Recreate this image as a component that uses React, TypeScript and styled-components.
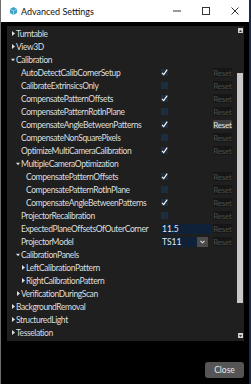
import React from 'react';
import styled, { createGlobalStyle } from 'styled-components';

const GlobalStyle = createGlobalStyle`
  html, body {
    margin: 0;
    padding: 0;
    background: #1b2a4a;
    font-family: Lato, "Noto Sans", sans-serif;
  }
`;

type Node = {
  label: string;
  level: number;
  arrow?: 'open' | 'closed';
  kind?: 'check' | 'text' | 'select';
  checked?: boolean;
  value?: string;
  resetOn?: boolean;
};

const rows: Node[] = [
  { label: 'Turntable', level: 0, arrow: 'closed' },
  { label: 'View3D', level: 0, arrow: 'closed' },
  { label: 'Calibration', level: 0, arrow: 'open' },
  { label: 'AutoDetectCalibCornerSetup', level: 1, kind: 'check', checked: true },
  { label: 'CalibrateExtrinsicsOnly', level: 1, kind: 'check' },
  { label: 'CompensatePatternOffsets', level: 1, kind: 'check', checked: true },
  { label: 'CompensatePatternRotInPlane', level: 1, kind: 'check' },
  { label: 'CompensateAngleBetweenPatterns', level: 1, kind: 'check', checked: true, resetOn: true },
  { label: 'CompensateNonSquarePixels', level: 1, kind: 'check' },
  { label: 'OptimizeMultiCameraCalibration', level: 1, kind: 'check', checked: true },
  { label: 'MultipleCameraOptimization', level: 1, arrow: 'open' },
  { label: 'CompensatePatternOffsets', level: 2, kind: 'check', checked: true },
  { label: 'CompensatePatternRotInPlane', level: 2, kind: 'check' },
  { label: 'CompensateAngleBetweenPatterns', level: 2, kind: 'check', checked: true },
  { label: 'ProjectorRecalibration', level: 1, kind: 'check' },
  { label: 'ExpectedPlaneOffsetsOfOuterCorner', level: 1, kind: 'text', value: '11.5' },
  { label: 'ProjectorModel', level: 1, kind: 'select', value: 'TS11' },
  { label: 'CalibrationPanels', level: 1, arrow: 'open' },
  { label: 'LeftCalibrationPattern', level: 2, arrow: 'closed' },
  { label: 'RightCalibrationPattern', level: 2, arrow: 'closed' },
  { label: 'VerificationDuringScan', level: 1, arrow: 'closed' },
  { label: 'BackgroundRemoval', level: 0, arrow: 'closed' },
  { label: 'StructuredLight', level: 0, arrow: 'closed' },
  { label: 'Tesselation', level: 0, arrow: 'closed' },
];

const Window = styled.div`
  width: 249px;
  height: 384px;
  display: flex;
  flex-direction: column;
  background: #000;
  border-left: 1px solid #6d6d6d;
  box-sizing: border-box;
`;

const TitleBar = styled.div`
  height: 22px;
  background: #fff;
  display: flex;
  align-items: center;
  padding-left: 9px;
  color: #111;
  font-size: 9px;
`;

const Title = styled.span`
  margin-left: 4px;
  flex: 1;
`;

const CaptionButton = styled.div`
  width: 29px;
  height: 22px;
  display: flex;
  align-items: center;
  justify-content: center;
`;

const Body = styled.div`
  flex: 1;
  display: flex;
  flex-direction: column;
  padding: 4px 5px 6px 6px;
`;

const Panel = styled.div`
  height: 315px;
  background: #1f1f1f;
  display: flex;
`;

const Tree = styled.div`
  width: 230px;
  padding-top: 1px;
`;

const Row = styled.div`
  height: 13px;
  display: grid;
  grid-template-columns: 154px 52px 19px;
  align-items: center;
`;

const Label = styled.div<{ $level: number }>`
  display: flex;
  align-items: center;
  padding-left: ${(p) => 4 + p.$level * 5}px;
  color: #dedede;
  font-size: 8.5px;
  letter-spacing: -0.4px;
  white-space: nowrap;
  overflow: hidden;
`;

const Arrow = styled.span`
  width: 4px;
  display: flex;
  justify-content: center;
`;

const Spacer = styled.span`
  width: 4px;
`;

const LabelText = styled.span`
  margin-left: 1px;
`;

const Box = styled.div`
  width: 7px;
  height: 7px;
  background: #1d2d40;
  display: flex;
  align-items: center;
  justify-content: center;
`;

const TextField = styled.div`
  width: 50px;
  height: 10px;
  background: #0e2138;
  color: #e6e6e6;
  font-size: 8.5px;
  display: flex;
  align-items: center;
  padding-left: 1px;
  box-sizing: border-box;
`;

const SelectField = styled.div`
  width: 47px;
  height: 10px;
  display: flex;
  color: #e6e6e6;
  font-size: 8.5px;
`;

const SelectValue = styled.div`
  flex: 1;
  background: #0e2138;
  display: flex;
  align-items: center;
  padding-left: 1px;
`;

const SelectArrow = styled.div`
  width: 11px;
  background: #4b4b4b;
  display: flex;
  align-items: center;
  justify-content: center;
`;

const ResetButton = styled.div<{ $on?: boolean }>`
  height: 9px;
  border-radius: 1px;
  background: ${(p) => (p.$on ? '#3d3d3d' : '#161616')};
  color: ${(p) => (p.$on ? '#e4e4e4' : '#4d4d4d')};
  font-size: 8px;
  letter-spacing: -0.2px;
  display: flex;
  align-items: center;
  justify-content: center;
`;

const ScrollBar = styled.div`
  width: 6px;
  display: flex;
  flex-direction: column;
  align-items: center;
  padding-top: 2px;
  padding-bottom: 3px;
`;

const ScrollArrow = styled.div`
  width: 5px;
  height: 5px;
  background: #d0d0d0;
  display: flex;
  align-items: center;
  justify-content: center;
`;

const Track = styled.div`
  flex: 1;
  width: 6px;
  display: flex;
  flex-direction: column;
  padding: 40px 0 30px;
`;

const Thumb = styled.div`
  flex: 1;
  background: #c9c9c9;
`;

const Footer = styled.div`
  flex: 1;
  display: flex;
  justify-content: flex-end;
  align-items: flex-end;
`;

const CloseButton = styled.div`
  width: 39px;
  height: 16px;
  border-radius: 3px;
  background: #555;
  color: #e8e8e8;
  font-size: 8.5px;
  display: flex;
  align-items: center;
  justify-content: center;
`;

const Tri = ({ open }: { open?: boolean }) =>
  open ? (
    <svg width="5" height="4" viewBox="0 0 5 4">
      <path d="M0 0.5 L5 0.5 L2.5 3.5 Z" fill="#dedede" />
    </svg>
  ) : (
    <svg width="3" height="5" viewBox="0 0 3 5">
      <path d="M0 0 L3 2.5 L0 5 Z" fill="#dedede" />
    </svg>
  );

const Check = () => (
  <svg width="7" height="7" viewBox="0 0 7 7">
    <path d="M1 3.8 L2.7 5.6 L6.2 0.6" stroke="#fff" strokeWidth="1.1" fill="none" />
  </svg>
);

const Control = ({ node }: { node: Node }) => {
  if (node.kind === 'check') return <Box>{node.checked && <Check />}</Box>;
  if (node.kind === 'text') return <TextField>{node.value}</TextField>;
  if (node.kind === 'select')
    return (
      <SelectField>
        <SelectValue>{node.value}</SelectValue>
        <SelectArrow>
          <svg width="5" height="4" viewBox="0 0 5 4">
            <path d="M0.5 0.8 L2.5 2.8 L4.5 0.8" stroke="#e0e0e0" strokeWidth="1.1" fill="none" />
          </svg>
        </SelectArrow>
      </SelectField>
    );
  return null;
};

export default function App() {
  return (
    <>
      <GlobalStyle />
      <Window>
        <TitleBar>
          <svg width="7" height="8" viewBox="0 0 7 8">
            <path d="M3.5 0 L7 2 L7 6 L3.5 8 L0 6 L0 2 Z" fill="#3fa0c8" />
            <path d="M3.5 4 L7 2 M3.5 4 L0 2 M3.5 4 L3.5 8" stroke="#bfe6f5" strokeWidth="0.7" />
          </svg>
          <Title>Advanced Settings</Title>
          <CaptionButton>
            <svg width="8" height="2" viewBox="0 0 8 2">
              <rect x="0" y="0.5" width="8" height="1" fill="#333" />
            </svg>
          </CaptionButton>
          <CaptionButton>
            <svg width="8" height="8" viewBox="0 0 8 8">
              <rect x="0.5" y="0.5" width="7" height="7" fill="none" stroke="#333" strokeWidth="1" />
            </svg>
          </CaptionButton>
          <CaptionButton>
            <svg width="8" height="8" viewBox="0 0 8 8">
              <path d="M0.5 0.5 L7.5 7.5 M7.5 0.5 L0.5 7.5" stroke="#333" strokeWidth="1" />
            </svg>
          </CaptionButton>
        </TitleBar>
        <Body>
          <Panel>
            <Tree>
              {rows.map((r, i) => (
                <Row key={i}>
                  <Label $level={r.level}>
                    {r.arrow ? (
                      <Arrow>
                        <Tri open={r.arrow === 'open'} />
                      </Arrow>
                    ) : (
                      <Spacer />
                    )}
                    <LabelText>{r.label}</LabelText>
                  </Label>
                  <div>{r.kind && <Control node={r} />}</div>
                  {r.kind && <ResetButton $on={r.resetOn}>Reset</ResetButton>}
                </Row>
              ))}
            </Tree>
            <ScrollBar>
              <ScrollArrow>
                <svg width="3" height="2" viewBox="0 0 3 2">
                  <path d="M0 2 L1.5 0 L3 2 Z" fill="#333" />
                </svg>
              </ScrollArrow>
              <Track>
                <Thumb />
              </Track>
              <ScrollArrow>
                <svg width="3" height="2" viewBox="0 0 3 2">
                  <path d="M0 0 L1.5 2 L3 0 Z" fill="#333" />
                </svg>
              </ScrollArrow>
            </ScrollBar>
          </Panel>
          <Footer>
            <CloseButton>Close</CloseButton>
          </Footer>
        </Body>
      </Window>
    </>
  );
}
